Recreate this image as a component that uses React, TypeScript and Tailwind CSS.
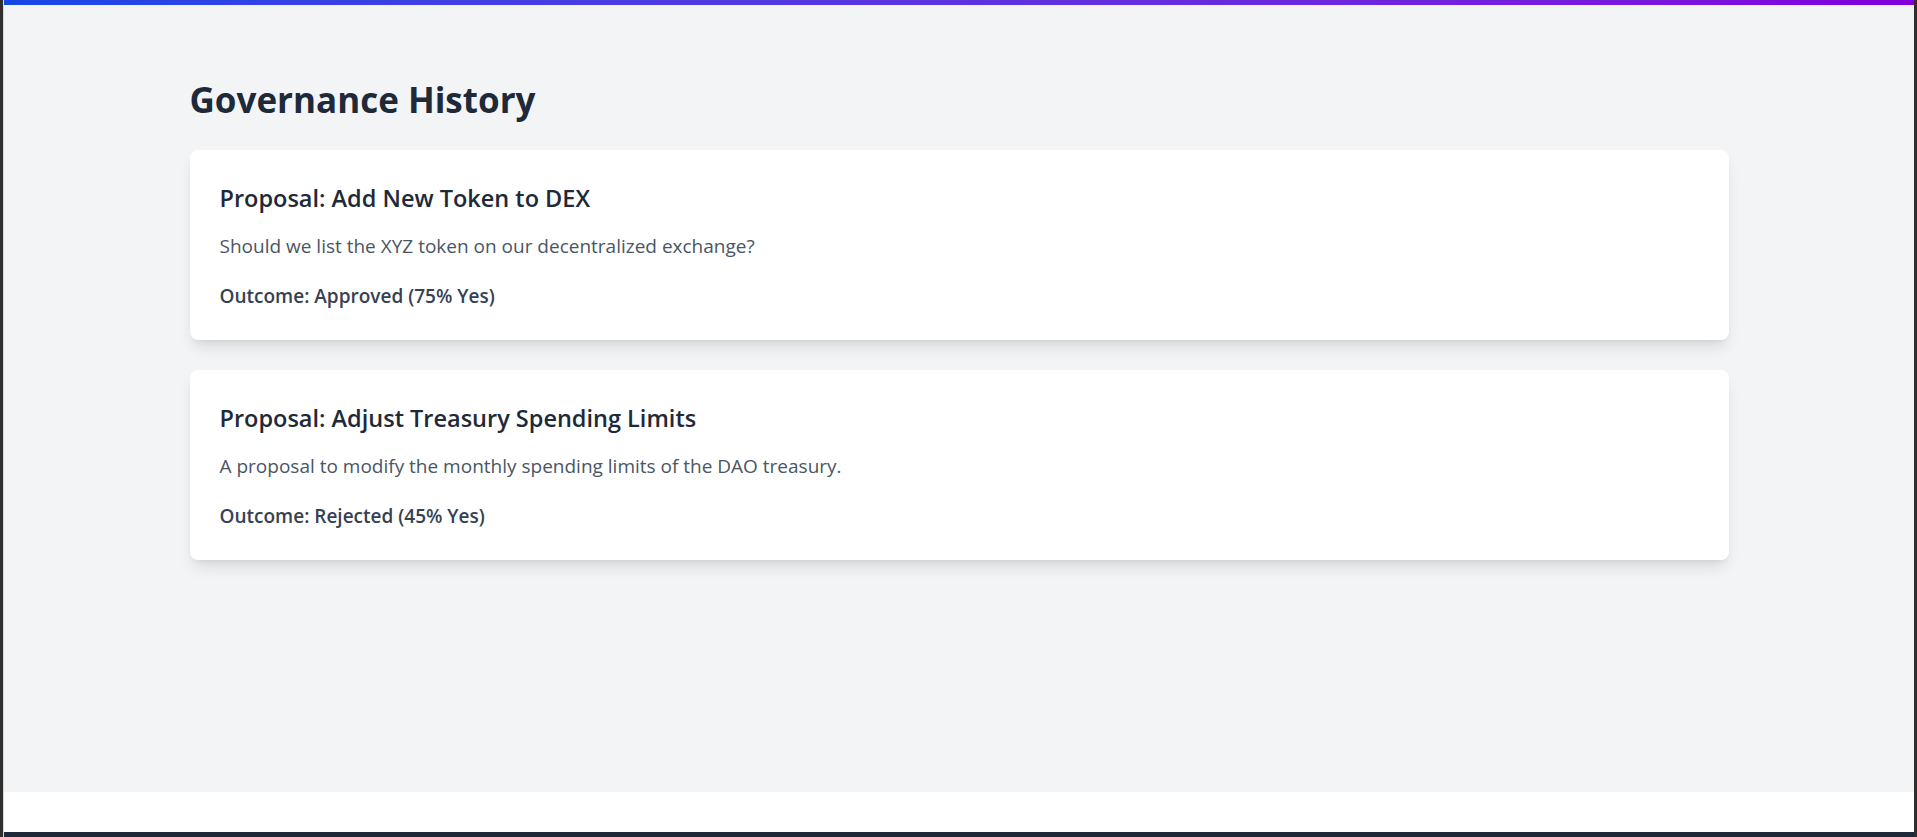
import React from 'react';

interface Proposal {
  id: number;
  title: string;
  description: string;
  outcome: string;
}

const proposals: Proposal[] = [
  {
    id: 1,
    title: 'Proposal: Add New Token to DEX',
    description: 'Should we list the XYZ token on our decentralized exchange?',
    outcome: 'Outcome: Approved (75% Yes)',
  },
  {
    id: 2,
    title: 'Proposal: Adjust Treasury Spending Limits',
    description:
      'A proposal to modify the monthly spending limits of the DAO treasury.',
    outcome: 'Outcome: Rejected (45% Yes)',
  },
];

const ProposalCard = ({ proposal }: { proposal: Proposal }) => (
  <div className="bg-white rounded-lg shadow-lg h-[190px] px-[30px] pt-[32px]">
    <h3 className="text-[23.5px] leading-8 font-semibold text-gray-800 mb-[18px]">
      {proposal.title}
    </h3>
    <p className="text-[19px] leading-7 text-gray-600 mb-[22px]">
      {proposal.description}
    </p>
    <p className="text-[19px] leading-7 font-semibold text-gray-700">
      {proposal.outcome}
    </p>
  </div>
);

const App = () => {
  return (
    <div
      className="h-screen flex bg-[#2f2f2f]"
      style={{ fontFamily: '"Open Sans", "Noto Sans", sans-serif' }}
    >
      <div className="w-[3px] shrink-0" />
      <div className="w-px shrink-0 bg-[#d9d9d9]" />
      <div className="flex-1 flex flex-col min-w-0">
        <div className="h-[5px] bg-gradient-to-r from-blue-700 to-purple-700" />
        <main className="flex-1 bg-gray-100 pt-[75px]">
          <div className="max-w-[1539px] mx-auto">
            <h1 className="text-[35px] leading-10 font-bold text-gray-800 mb-[30px]">
              Governance History
            </h1>
            <div className="flex flex-col gap-[30px]">
              {proposals.map(proposal => (
                <ProposalCard key={proposal.id} proposal={proposal} />
              ))}
            </div>
          </div>
        </main>
        <footer className="h-[40px] bg-white" />
        <div className="h-[5px] bg-[#1f2937]" />
      </div>
      <div className="w-[3px] shrink-0" />
    </div>
  );
};

export default App;
